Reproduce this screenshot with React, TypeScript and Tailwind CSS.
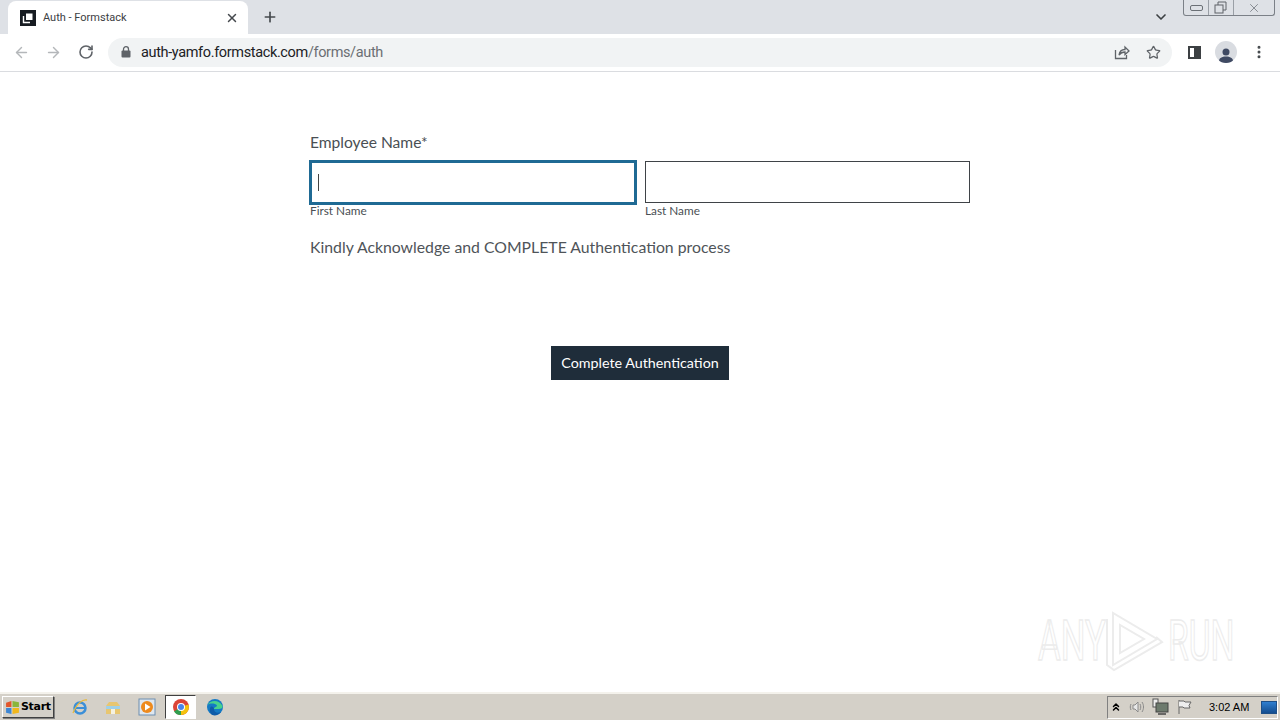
import { ArrowLeft, ArrowRight, RotateCw, X, Plus, ChevronDown, Star, EllipsisVertical, ChevronsUp } from "lucide-react";

const TabStrip = () => (
  <div className="flex h-[34px] bg-[#dee1e6] shrink-0">
    <div className="ml-2 mt-[1px] flex h-[33px] w-[240px] items-center rounded-t-lg bg-white pl-[12px] pr-[2px]">
      <svg width="16" height="16" viewBox="0 0 16 16" className="shrink-0">
        <rect width="16" height="16" fill="#171c22" />
        <path d="M6 3.5h6.5V10H6z" fill="#fff" />
        <path d="M3.5 6v6.500H10" fill="none" stroke="#fff" strokeWidth="1.400" />
      </svg>
      <span className="ml-[7px] mt-[1px] flex-1 text-[11px] text-[#3c4043] font-['Roboto',sans-serif]">Auth - Formstack</span>
      <X size={14} strokeWidth={2.5} className="text-[#45494d]" />
      <span className="w-[7px]" />
    </div>
    <Plus size={16} strokeWidth={2.500} className="ml-[14px] mt-[9px] text-[#45494d]" />
    <div className="flex-1" />
    <ChevronDown size={16} strokeWidth={2.500} className="mt-[9px] ml-[1px] text-[#3c4043]" />
    <div className="mr-[5px] ml-[14px] flex h-[16px] w-[92px] items-center rounded-b-[3px] border border-t-0 border-[#7b8087]">
      <div className="flex h-full w-[25px] items-center justify-center border-r border-[#9a9fa6]">
        <span className="h-[6px] w-[13px] rounded-[2px] border border-[#6b7076]" />
      </div>
      <div className="flex h-full w-[25px] items-center justify-center border-r border-[#9a9fa6]">
        <svg width="14" height="13" viewBox="0 0 14 13" fill="none" stroke="#5f6368">
          <rect x="1" y="4" width="8" height="8" />
          <path d="M4 4V1h8v8H9" />
        </svg>
      </div>
      <div className="flex flex-1 items-center justify-center">
        <X size={14} strokeWidth={1.500} className="text-[#7b8087]" />
      </div>
    </div>
  </div>
);

const Toolbar = () => (
  <div className="flex h-[38px] shrink-0 items-center border-b border-[#dadce0] bg-white pb-[1px]">
    <ArrowLeft size={17} strokeWidth={2} className="ml-[13px] text-[#b4b7ba]" />
    <ArrowRight size={17} strokeWidth={2} className="ml-[15px] text-[#b4b7ba]" />
    <RotateCw size={16} strokeWidth={2.400} className="ml-[16px] text-[#5f6368]" />
    <div className="ml-[14px] flex h-[29px] w-[1064px] items-center rounded-full bg-[#f1f3f4] pl-[13px]">
      <svg width="10" height="12" viewBox="0 0 10 12" className="-mt-[1px] shrink-0">
        <rect x="0.500" y="4.500" width="9" height="7" rx="1" fill="#5f6368" />
        <path d="M2.500 5V3.200a2.500 2.500 0 0 1 5 0V5" fill="none" stroke="#5f6368" strokeWidth="1.300" />
      </svg>
      <span className="ml-[10px] mt-[1px] text-[14.500px] tracking-[-0.36px] text-[#202124] font-['Roboto',sans-serif]">
        auth-yamfo.formstack.com<span className="text-[#6b6f73]">/forms/auth</span>
      </span>
      <div className="flex-1" />
      <svg width="16" height="16" viewBox="0 0 16 16" fill="none" stroke="#5f6368" strokeWidth="1.300">
        <path d="M1.500 6v8.500h11V11" />
        <path d="M5 11c.5-3.500 3-5.500 6-5.500V3l4 4-4 3.500V8c-2.500 0-4.500 1-6 3z" />
      </svg>
      <Star size={15} strokeWidth={2} className="ml-[16px] mr-[11px] text-[#5f6368]" />
    </div>
    <div className="ml-[16px] flex h-[13px] w-[13px] border-2 border-[#3c4043]">
      <span className="ml-auto h-full w-[5px] bg-[#3c4043]" />
    </div>
    <div className="ml-[14px] flex h-[22px] w-[22px] items-end justify-center overflow-hidden rounded-full bg-[#d9dce1]">
      <svg width="14" height="16" viewBox="0 0 14 16" fill="#3f4a63">
        <circle cx="7" cy="5" r="3.500" />
        <path d="M0 14c0-3 3-4.500 7-4.500s7 1.500 7 4.500v2H0z" />
      </svg>
    </div>
    <EllipsisVertical size={16} strokeWidth={2.500} className="ml-[14px] text-[#45494d]" />
  </div>
);

const NameField = ({ label, focused }: { label: string; focused?: boolean }) => (
  <div className="w-[325px]">
    <div
      className={
        focused
          ? "flex h-[45px] w-[328px] -ml-px -mt-px -mb-[2px] items-center border-[3px] border-[#1f6a94] bg-white pl-[6px]"
          : "h-[42px] border border-[#3f4347] bg-white"
      }
    >
      {focused && <span className="h-[17px] w-px bg-[#444]" />}
    </div>
    <div className="mt-[1px] text-[11.800px] leading-[14px] text-[#4a4f54]">{label}</div>
  </div>
);

const Watermark = () => (
  <div className="pointer-events-none absolute right-[48px] bottom-[48px] flex h-[62px] w-[194px] items-center text-[56px] leading-[62px] text-transparent [-webkit-text-stroke:1.500px_#ececec] font-['Roboto',sans-serif]">
    <span className="inline-block w-[62px] origin-left scale-x-[0.62]">ANY</span>
    <svg width="60" height="62" viewBox="0 0 60 62" fill="none" stroke="#ececec" strokeWidth="2" className="ml-[5px] shrink-0">
      <path d="M8 3v52l44-26z" />
      <path d="M15 15v28l24-14z" />
      <path d="M2 9v46l7 5 48-28-6-5" />
    </svg>
    <span className="ml-[3px] inline-block w-[64px] origin-left scale-x-[0.6]">RUN</span>
  </div>
);

const Taskbar = () => (
  <div className="flex h-[28px] shrink-0 items-center border-t-2 border-[#f4f2ec] bg-[#d4d0c8]">
    <div className="ml-[2px] flex h-[22px] w-[52px] items-center border border-t-white border-l-white border-r-[#404040] border-b-[#404040] bg-[#d4d0c8] pl-[2px] shadow-[1px_1px_0_#808080]">
      <svg width="15" height="15" viewBox="0 0 14 14" className="shrink-0">
        <path d="M1 2.500l5-1.500v5.500H1z" fill="#e2562b" />
        <path d="M7 1l6 1v4.500H7z" fill="#8ab53c" />
        <path d="M1 7.500h5V13l-5-1z" fill="#3d86d4" />
        <path d="M7 7.500h6V12l-6 1z" fill="#f1b71c" />
      </svg>
      <span className="ml-[1px] text-[11px] font-bold text-black font-['DejaVu_Sans',sans-serif] tracking-[-0.3px]">Start</span>
    </div>
    <svg width="18" height="18" viewBox="0 0 18 18" fill="none" className="ml-[17px]">
      <circle cx="9" cy="10" r="5.500" stroke="#3b8fd8" strokeWidth="2.500" />
      <path d="M4 10h10" stroke="#3b8fd8" strokeWidth="2" />
      <path d="M2 15C6 5 12 1 16 2" stroke="#e9b93a" strokeWidth="1.300" />
    </svg>
    <svg width="18" height="18" viewBox="0 0 18 18" className="ml-[15px]">
      <path d="M2 8l3-4h8l3 4v8H2z" fill="#e8c670" />
      <path d="M2 8h14v3H2z" fill="#9fd0e8" />
      <rect x="7" y="11" width="4" height="5" fill="#f5f2e2" />
    </svg>
    <svg width="18" height="18" viewBox="0 0 18 18" className="ml-[16px]">
      <rect x="1" y="1" width="16" height="16" fill="#dfe7ef" stroke="#6d8eb0" />
      <circle cx="9" cy="9" r="6" fill="#ee8a1d" />
      <path d="M7 5.500L12.500 9 7 12.500z" fill="#fff" />
    </svg>
    <div className="ml-[9px] flex h-[24px] w-[31px] items-center justify-center border border-t-[#404040] border-l-[#404040] border-r-white border-b-white bg-white">
      <svg width="18" height="18" viewBox="0 0 18 18">
        <circle cx="9" cy="9" r="8" fill="#db4437" />
        <path d="M9 9L2 13.500A8 8 0 0 0 9 17z" fill="#2f9e4f" />
        <path d="M9 9l7.500-2.500A8 8 0 0 1 9 17z" fill="#f4c20d" />
        <circle cx="9" cy="9" r="4" fill="#fff" />
        <circle cx="9" cy="9" r="3" fill="#4a84ea" />
      </svg>
    </div>
    <svg width="18" height="18" viewBox="0 0 18 18" className="ml-[10px]">
      <circle cx="9" cy="9" r="8" fill="#1479c4" />
      <path d="M1.500 7C4 2 13 1 16.500 8c.5 2-1 3-4 3H8c0-2 3-2 3-3.500C9 5 4 5 1.500 7z" fill="#47d18c" />
      <path d="M8 11c0 3 3 5 7 3-2 3-6 4-8.500 3S3 12 4.500 9C6 8 8 9 8 11z" fill="#0e5ba8" />
    </svg>
    <div className="flex-1" />
    <div className="mr-[2px] flex h-[23px] w-[171px] items-center whitespace-nowrap border border-t-[#808080] border-l-[#808080] border-r-white border-b-white pl-[1px]">
      <ChevronsUp size={12} strokeWidth={3} className="ml-[1px] shrink-0 text-black" />
      <svg width="18" height="18" viewBox="0 0 18 18" fill="none" stroke="#8a8a8a" className="ml-[7px] shrink-0">
        <path d="M4 7v4h2l3 3V4L6 7z" fill="#e8e8e8" />
        <path d="M11 6c1 2 1 4 0 6M13 4c2 3 2 7 0 10" />
        <path d="M2 6c-1 2-1 4 0 6" />
      </svg>
      <svg width="18" height="18" viewBox="0 0 18 18" className="ml-[5px] shrink-0">
        <rect x="1" y="1" width="5" height="8" fill="#eee" stroke="#555" />
        <rect x="4" y="5" width="12" height="9" fill="#6d7a6d" stroke="#444" />
        <path d="M6 16h8" stroke="#444" strokeWidth="1.500" />
      </svg>
      <svg width="16" height="16" viewBox="0 0 16 16" fill="none" stroke="#666" className="ml-[7px] shrink-0">
        <path d="M2 1v14" />
        <path d="M2 2h5l1 1h6l-2 3.500 1 2.500H7L6 8H2" fill="#eee" />
      </svg>
      <span className="ml-[16px] w-[41px] shrink-0 text-[11px] text-black font-['Liberation_Sans',sans-serif]">3:02 AM</span>
      <div className="ml-[11px] h-[13px] w-[16px] shrink-0 border border-[#1d4f87] bg-gradient-to-b from-[#2f7fd0] to-[#134d8f]" />
    </div>
  </div>
);

export default function App() {
  return (
    <div className="relative flex h-screen flex-col overflow-hidden bg-white font-['Lato',sans-serif]">
      <TabStrip />
      <Toolbar />
      <main className="flex flex-1 flex-col pl-[310px] pt-[59px]">
        <div className="text-[15.600px] leading-[22px] text-[#4a4f54]">Employee Name*</div>
        <div className="mt-[8px] flex gap-[10px]">
          <NameField label="First Name" focused />
          <NameField label="Last Name" />
        </div>
        <p className="mt-[18px] text-[15.800px] leading-[22px] text-[#4f5459]">Kindly Acknowledge and COMPLETE Authentication process</p>
        <button className="mt-[88px] ml-[241px] h-[34px] w-[178px] bg-[#1f2d3a] text-[14.300px] text-white">Complete Authentication</button>
      </main>
      <Watermark />
      <Taskbar />
    </div>
  );
}
